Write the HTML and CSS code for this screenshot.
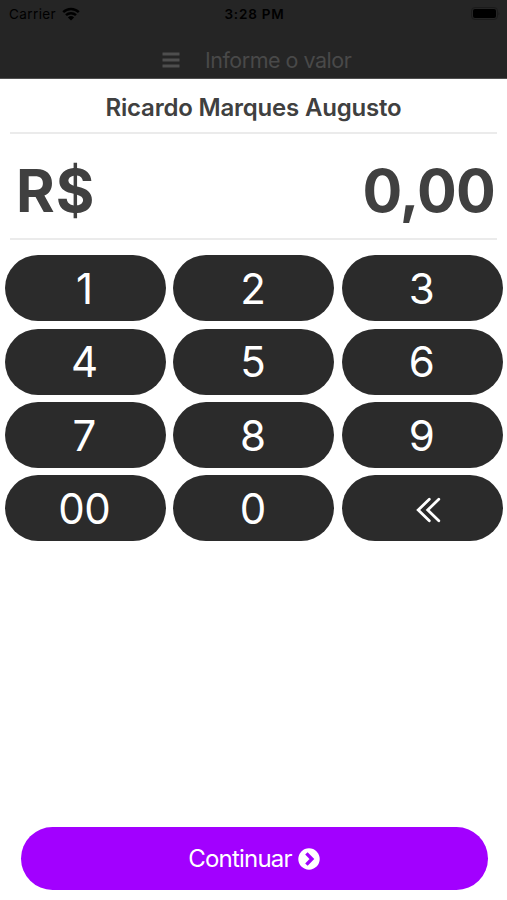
FILE: index.html
```
<!DOCTYPE html>
<html lang="pt-BR">
<head>
  <meta charset="UTF-8">
  <meta name="viewport" content="width=device-width, initial-scale=1.0">
  <title>Informe o valor</title>
  <link rel="stylesheet" href="styles.css">
</head>
<body>
  <header class="header">
    <div class="status-bar">
      <div class="carrier">
        <span>Carrier</span>
        <svg class="wifi" viewBox="0 0 18 14" width="18" height="14">
          <path d="M1.2 5.2a11.2 11.2 0 0 1 15.6 0M4 8.2a7.2 7.2 0 0 1 10 0" fill="none" stroke="#000" stroke-width="2.5"/>
          <path d="M9 13.6L5.9 10.5a4.5 4.5 0 0 1 6.2 0z"/>
        </svg>
      </div>
      <div class="clock">3:28 PM</div>
      <div class="battery-box">
        <svg width="29" height="13" viewBox="0 0 29 13">
          <rect x=".5" y=".5" width="26" height="12" rx="3.5" fill="none" stroke="#1b1b1b"/>
          <rect x="2" y="2" width="23" height="9" rx="2"/>
          <path d="M27.5 4.5q1.5 2 0 4z" fill="#1b1b1b"/>
        </svg>
      </div>
    </div>
    <div class="nav-bar">
      <svg class="menu-icon" width="18" height="16" viewBox="0 0 18 16">
        <path d="M.5 2h17M.5 8h17M.5 14h17" stroke="#4e4e4e" stroke-width="2.8"/>
      </svg>
      <span class="nav-title">Informe o valor</span>
    </div>
  </header>

  <main class="content">
    <h1 class="customer">Ricardo Marques Augusto</h1>

    <div class="amount">
      <span class="currency">R$</span>
      <span class="value">0,00</span>
    </div>

    <!-- Keypad -->
    <div class="keypad">
      <button class="key">1</button>
      <button class="key">2</button>
      <button class="key">3</button>
      <button class="key">4</button>
      <button class="key">5</button>
      <button class="key">6</button>
      <button class="key">7</button>
      <button class="key">8</button>
      <button class="key">9</button>
      <button class="key">00</button>
      <button class="key">0</button>
      <button class="key key-back" aria-label="Apagar">
        <svg width="26" height="26" viewBox="0 0 26 26">
          <path d="M13.3 2.2L2.2 13l11.1 10.8M22.8 2.2L11.7 13l11.1 10.8" fill="none" stroke="#fff" stroke-width="2.8" stroke-linecap="round"/>
        </svg>
      </button>
    </div>
  </main>

  <footer class="footer">
    <button class="continue">
      <span>Continuar</span>
      <svg width="22" height="22" viewBox="0 0 22 22">
        <circle cx="11" cy="11" r="10.7" fill="#fff"/>
        <path d="M8.4 5.4l5.5 5.6-5.5 5.6" fill="none" stroke="#a200ff" stroke-width="3.4"/>
      </svg>
    </button>
  </footer>
</body>
</html>
```
FILE: styles.css
```
* {
  box-sizing: border-box;
}

body {
  margin: 0;
  height: 900px;
  display: flex;
  flex-direction: column;
  background: #fff;
  color: #404040;
  font-family: Inter, "Liberation Sans", sans-serif;
  overflow: hidden;
}

.header {
  height: 79px;
  background: #252525;
  border-bottom: 1px solid #505050;
}

.status-bar {
  display: grid;
  grid-template-columns: 1fr auto 1fr;
  align-items: center;
  height: 27px;
  padding: 0 7px 0 9px;
  color: #000;
  font-size: 13.5px;
}

.carrier {
  display: flex;
  align-items: center;
  gap: 6px;
  letter-spacing: 0.4px;
}

.clock {
  font-weight: 600;
  letter-spacing: 0.8px;
}

.battery-box {
  display: flex;
  justify-content: flex-end;
}

.nav-bar {
  display: flex;
  align-items: center;
  height: 52px;
  padding: 13px 0 0 162px;
  gap: 25px;
}

.nav-title {
  padding-top: 1px;
  color: #494949;
  font-size: 21.5px;
  line-height: 26px;
  letter-spacing: -0.5px;
}

.content {
  flex: 1;
}

.customer {
  height: 55px;
  margin: 0 10px;
  border-bottom: 2px solid #ebebeb;
  font-size: 24px;
  font-weight: 600;
  line-height: 58px;
  letter-spacing: -0.2px;
  text-align: center;
}

.amount {
  display: flex;
  justify-content: space-between;
  align-items: center;
  height: 106px;
  margin: 0 10px;
  padding: 9px 2px 0 6px;
  border-bottom: 2px solid #ebebeb;
  font-size: 59px;
  font-weight: 700;
}

.currency {
  letter-spacing: 1px;
}

.value {
  letter-spacing: -0.8px;
}

.keypad {
  display: grid;
  grid-template-columns: repeat(3, 1fr);
  grid-auto-rows: 66px;
  gap: 7.4px;
  padding: 15.3px 4px 0 4.6px;
}

button {
  border: 0;
  color: #fff;
  font-family: inherit;
  cursor: pointer;
}

.key {
  display: flex;
  justify-content: center;
  align-items: center;
  padding: 0 2px 0 0;
  background: #2b2b2b;
  border-radius: 33px;
  font-size: 42px;
  letter-spacing: -0.6px;
}

.key-back {
  padding: 4px 0 0 13px;
}

.footer {
  padding: 0 19.5px 10px 20.5px;
}

.continue {
  display: flex;
  justify-content: center;
  align-items: center;
  gap: 6px;
  width: 100%;
  height: 63px;
  padding: 0;
  background: #a200ff;
  border-radius: 32px;
  font-size: 24px;
  letter-spacing: -0.8px;
}
```
